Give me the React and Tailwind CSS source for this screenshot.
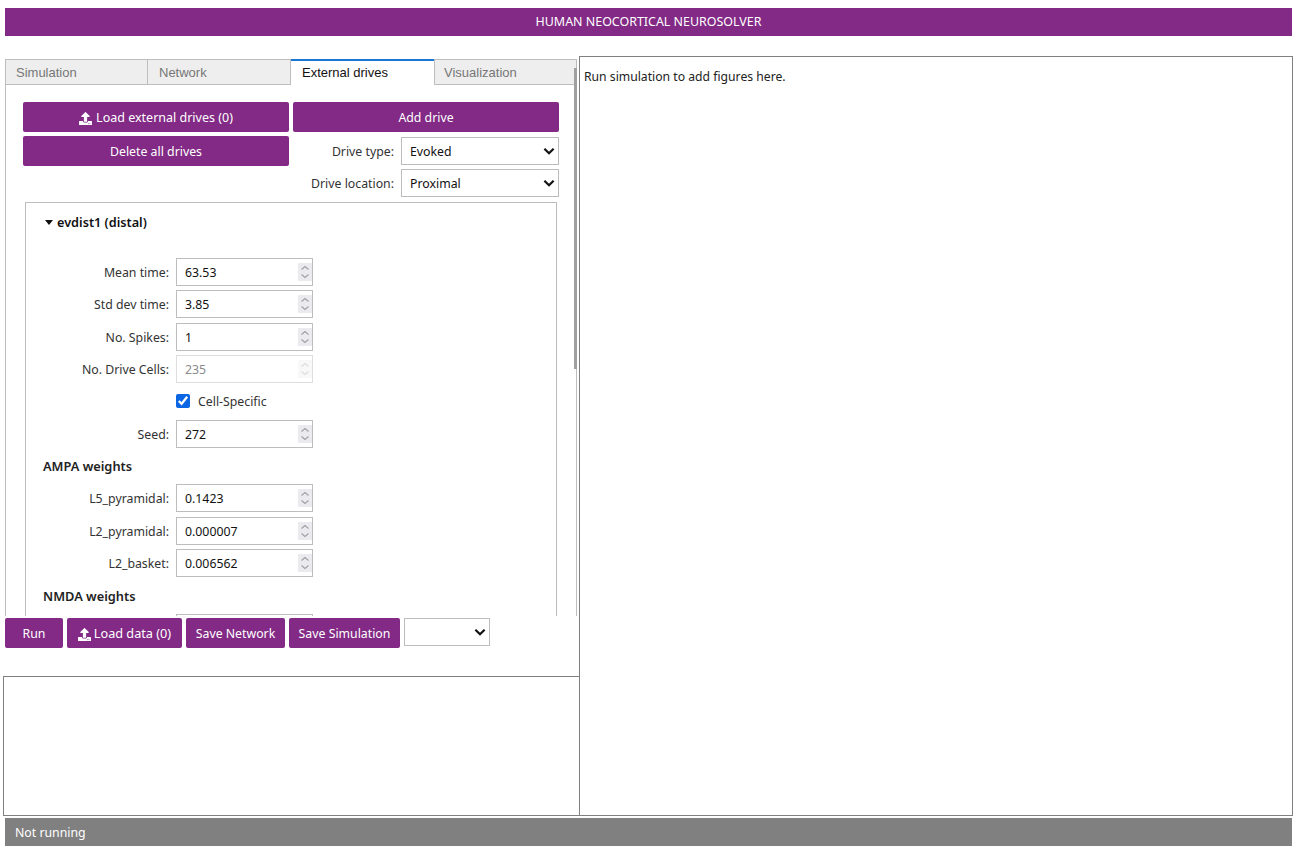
import React from "react";
import { FaUpload } from "react-icons/fa";

const FONT = "font-['Noto_Sans','Open_Sans',sans-serif]";

function Upload() {
  return <FaUpload size={13} color="#fff" className="shrink-0" />;
}

function Chevron() {
  return (
    <svg width="12" height="12" viewBox="0 0 12 12" fill="none" stroke="#111" strokeWidth="2.2">
      <path d="M1.4 3.8 L6 8.2 L10.6 3.8" />
    </svg>
  );
}

function Btn({ children, className = "" }) {
  return (
    <button className={`h-[30px] pt-[2px] bg-[#822a85] rounded-[2px] text-white flex items-center justify-center gap-[4px] ${className}`}>
      {children}
    </button>
  );
}

function Select({ value, className = "" }) {
  return (
    <div className={`relative h-[28px] ${className}`}>
      <select
        defaultValue={value}
        className="appearance-none w-full h-full border border-[#bdbdbd] bg-white pl-2 pt-[2px] text-[12.3px] text-[#111] outline-none"
      >
        <option>{value}</option>
      </select>
      <span className="absolute right-[4px] top-[8px] pointer-events-none">
        <Chevron />
      </span>
    </div>
  );
}

function Spin({ dim }) {
  return (
    <span className={`absolute right-[1px] top-[5px] w-[14px] h-[18px] flex items-center justify-center ${dim ? "bg-[#f8f8f9]" : "bg-[#ebebef]"}`}>
      <svg width="10" height="16" viewBox="0 0 10 16" fill="none" stroke={dim ? "#dcdcdc" : "#a0a0a0"} strokeWidth="1.1">
        <path d="M1.5 5.5 L5 2.5 L8.5 5.5" />
        <path d="M1.5 10.5 L5 13.5 L8.5 10.5" />
      </svg>
    </span>
  );
}

function Field({ label, value, disabled, className = "" }) {
  return (
    <div className={`flex items-center h-[28px] ${className}`}>
      <label className="w-[142px] text-right text-[12.3px] text-[#333] pt-[2px]">{label}</label>
      <div className="relative ml-[7px] w-[137px] h-[28px]">
        <input
          readOnly
          disabled={disabled}
          value={value}
          className={`w-full h-full border bg-white pl-2 text-[12.3px] outline-none ${disabled ? "border-[#dedede] text-[#8a8a8a]" : "border-[#bdbdbd] text-[#111]"}`}
        />
        <Spin dim={disabled} />
      </div>
    </div>
  );
}

function Tab({ label, active, className = "" }) {
  return (
    <div
      className={`h-[26px] pt-[2px] flex items-center font-['Liberation_Sans',sans-serif] text-[13px] border-[#bdbdbd] ${
        active
          ? "bg-white text-[#111] border-r relative"
          : "bg-[#eeeeee] text-[#777] border-t border-b border-r"
      } ${className}`}
    >
      {active && <span className="absolute left-0 right-0 top-0 h-[2px] bg-[#1976d2]" />}
      {label}
    </div>
  );
}

export default function App() {
  return (
    <div className={`w-[1305px] h-[858px] bg-white overflow-hidden pt-2 ${FONT}`}>
      <div className="ml-[5px] w-[1287px] h-[28px] bg-[#822a85] text-white text-[12.45px] flex items-center justify-center">
        HUMAN NEOCORTICAL NEUROSOLVER
      </div>

      <div className="mt-5 flex h-[760px]">
        <div className="w-[579px] shrink-0 flex flex-col">
          <div className="ml-[5px] mt-[3px] w-[572px] flex">
            <Tab label="Simulation" className="w-[143px] border-l pl-[10px]" />
            <Tab label="Network" className="w-[143px] pl-[11px]" />
            <Tab label="External drives" active className="w-[144px] pl-[11px]" />
            <Tab label="Visualization" className="w-[142px] pl-[9px]" />
          </div>
          <div className="relative ml-[5px] w-[572px] h-[531px] border-l border-r border-[#bdbdbd]">
            <div className="h-full overflow-hidden pt-[17px] pl-[17px]">
              <div className="flex gap-[4px] w-[536px]">
                <div className="w-[266px] flex flex-col gap-[4px]">
                  <Btn className="text-[12.5px]"><Upload /><span>Load external drives (0)</span></Btn>
                  <Btn className="text-[12.3px]">Delete all drives</Btn>
                </div>
                <div className="w-[266px] flex flex-col">
                  <Btn className="text-[12.3px]">Add drive</Btn>
                  <div className="mt-[5px] flex items-center justify-end gap-[7px]">
                    <span className="text-[12.3px] text-[#333] pt-[2px]">Drive type:</span>
                    <Select value="Evoked" className="w-[158px]" />
                  </div>
                  <div className="mt-[4px] flex items-center justify-end gap-[7px]">
                    <span className="text-[12.3px] text-[#333] pt-[2px]">Drive location:</span>
                    <Select value="Proximal" className="w-[158px]" />
                  </div>
                </div>
              </div>

              <div className="ml-[2px] mt-[5px] w-[532px] h-[600px] border border-[#bdbdbd] pl-[1px]">
                <div className="pl-[18px] pt-[10px] h-[55px] flex items-start gap-[4px] text-[12.7px] font-semibold text-[#111]">
                  <svg width="8" height="5" viewBox="0 0 8 5" className="mt-[7px]" fill="#111"><path d="M0 0 H8 L4 5 Z" /></svg>
                  evdist1 (distal)
                </div>
                <Field label="Mean time:" value="63.53" />
                <Field label="Std dev time:" value="3.85" className="mt-[4px]" />
                <Field label="No. Spikes:" value="1" className="mt-[5px]" />
                <Field label="No. Drive Cells:" value="235" disabled className="mt-[4px]" />
                <div className="mt-[4px] h-[28px] flex items-center pl-[149px]">
                  <input type="checkbox" readOnly checked className="w-[14px] h-[14px] accent-[#0b66e4] m-0" />
                  <span className="ml-[8px] pt-[2px] text-[12.3px] text-[#333]">Cell-Specific</span>
                </div>
                <Field label="Seed:" value="272" className="mt-[5px]" />
                <div className="pl-[16px] mt-[7px] h-[24px] flex items-center text-[12.8px] font-semibold text-[#222]">AMPA weights</div>
                <Field label="L5_pyramidal:" value="0.1423" className="mt-[5px]" />
                <Field label="L2_pyramidal:" value="0.000007" className="mt-[5px]" />
                <Field label="L2_basket:" value="0.006562" className="mt-[4px]" />
                <div className="pl-[16px] mt-[8px] h-[24px] flex items-center text-[12.8px] font-semibold text-[#222]">NMDA weights</div>
                <Field label="" value="" className="mt-[5px]" />
              </div>
            </div>
            <span className="absolute right-[-1px] top-[-17px] w-[3px] h-[301px] bg-[#a0a0a0]" />
          </div>

          <div className="ml-[5px] mt-[2px] flex gap-[4px] h-[30px]">
            <Btn className="w-[58px] text-[12.3px]">Run</Btn>
            <Btn className="w-[115px] text-[12.7px] !gap-[3px]"><Upload /><span>Load data (0)</span></Btn>
            <Btn className="w-[99px] text-[12.3px]">Save Network</Btn>
            <Btn className="w-[111px] text-[12.3px]">Save Simulation</Btn>
            <div className="relative w-[86px] h-[28px]">
              <select aria-label="Data" className="appearance-none w-full h-full border border-[#bdbdbd] bg-white outline-none" />
              <span className="absolute right-[4px] top-[8px] pointer-events-none"><Chevron /></span>
            </div>
          </div>

          <div className="ml-[3px] mt-[28px] w-[576px] h-[140px] border border-[#808080] border-r-0" />
        </div>

        <div className="w-[714px] h-[760px] border border-[#808080] px-[4px] pt-[11px] text-[12.2px] text-[#222]">
          Run simulation to add figures here.
        </div>
      </div>

      <div className="mt-[2px] ml-[5px] w-[1287px] h-[28px] bg-[#808080] text-white text-[12.3px] flex items-center pl-[10px] pt-[3px]">
        Not running
      </div>
    </div>
  );
}
